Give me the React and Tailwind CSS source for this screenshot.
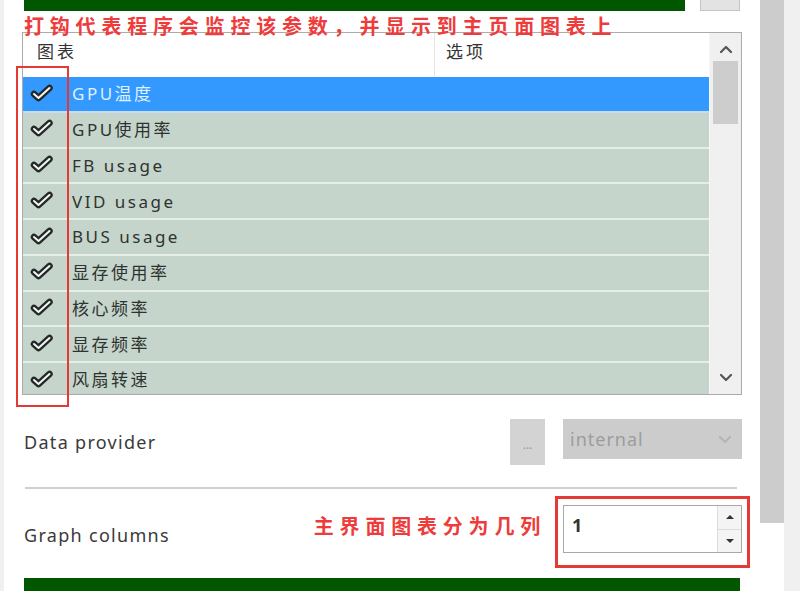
import React from "react";

const items = [
  "GPU温度",
  "GPU使用率",
  "FB usage",
  "VID usage",
  "BUS usage",
  "显存使用率",
  "核心频率",
  "显存频率",
  "风扇转速",
];

function Check() {
  return (
    <svg width="24" height="20" viewBox="0 0 24 20" className="shrink-0 -mt-[3px]">
      <path d="M4 11 L8.5 15 L19.5 5" fill="none" stroke="#232828" strokeWidth="6.5" strokeLinecap="round" strokeLinejoin="round" />
      <path d="M4 11 L8.5 15 L19.5 5" fill="none" stroke="#f4f6f4" strokeWidth="2" strokeLinecap="round" strokeLinejoin="round" />
    </svg>
  );
}

function Chevron({ up, className }) {
  return (
    <svg width="14" height="9" viewBox="0 0 14 9" className={className}>
      <path d={up ? "M2 7 L7 2 L12 7" : "M2 2 L7 7 L12 2"} fill="none" stroke="currentColor" strokeWidth="2.2" strokeLinecap="round" strokeLinejoin="round" />
    </svg>
  );
}

function MonitorList() {
  return (
    <div className="relative -mt-[2px] h-[363px] border border-[#ababab] flex bg-white">
      <div className="flex-1 flex flex-col">
        <div className="h-[44px] shrink-0 flex border-b border-white">
          <div className="w-[412px] pl-[14px] pt-[6px] text-[17px] tracking-[3px] text-[#333] border-r border-[#e4e4e4]">图表</div>
          <div className="pl-[11px] pt-[6px] text-[17px] tracking-[3px] text-[#333]">选项</div>
        </div>
        <div className="flex-1 flex flex-col overflow-hidden">
          {items.map((name, i) => (
            <div
              key={name}
              className={
                i === 0
                  ? "h-[35.75px] shrink-0 flex items-center pl-[7px] gap-[18px] bg-[#3399ff] border-b-2 border-[#c9dcf0]"
                  : "h-[35.75px] shrink-0 flex items-center pl-[7px] gap-[18px] bg-[#c5d5cb] border-b-2 border-[#e6eee8]"
              }
            >
              <Check />
              <span
                className={
                  i === 0
                    ? "text-[17px] tracking-[2.5px] text-[#dff0ff]"
                    : "text-[17px] tracking-[2.5px] text-[#2e3330]"
                }
              >
                {name}
              </span>
            </div>
          ))}
        </div>
      </div>
      <div className="w-[32px] bg-[#f0f0f0] flex flex-col items-center border-l border-[#f7f7f7]">
        <Chevron up className="mt-[12px] text-[#555]" />
        <div className="mt-[7px] w-[25px] h-[63px] bg-[#cdcdcd]" />
        <div className="flex-1" />
        <Chevron className="mb-[12px] text-[#555]" />
      </div>
      {/* red annotation box over the check column */}
      <div className="absolute left-[-7px] top-[33px] w-[53px] h-[341px] border-2 border-[#e53935]" />
    </div>
  );
}

export default function App() {
  return (
    <div
      className="w-[800px] h-[591px] flex bg-white overflow-hidden"
      style={{ fontFamily: '"Noto Sans", "Noto Sans CJK SC", sans-serif' }}
    >
      <div className="w-[4px] bg-[#f0f0f0]" />

      <div className="w-[741px] pl-[18px] pr-[3px] flex flex-col">
        {/* top bar */}
        <div className="h-[12px] flex">
          <div className="ml-[2px] w-[661px] bg-[#005700]" />
          <div className="ml-[15px] w-[40px] bg-[#e3e3e3] border border-t-0 border-[#c4c4c4]" />
        </div>

        <div className="h-[23px] pl-[2px] pt-[3px] text-[20px] leading-[26px] font-bold tracking-[5.8px] text-[#ee3b3b] whitespace-nowrap relative z-10">
          打钩代表程序会监控该参数，并显示到主页面图表上
        </div>

        <MonitorList />

        {/* data provider */}
        <div className="mt-[24px] h-[46px] flex items-center">
          <span className="pl-[2px] text-[18px] tracking-[1.3px] text-[#3a3a3a]">Data provider</span>
          <div className="flex-1" />
          <div className="w-[35px] h-[46px] bg-[#d3d3d3] flex items-center justify-center text-[12px] text-[#9a9a9a] pt-[6px]">...</div>
          <div className="ml-[18px] w-[179px] h-[40px] -mt-[6px] bg-[#cccccc] flex items-center pl-[7px] pr-[10px]">
            <span className="text-[18px] tracking-[1px] text-[#9c9c9c]">internal</span>
            <div className="flex-1" />
            <Chevron className="text-[#b5b5b5]" />
          </div>
        </div>

        <div className="mt-[22px] ml-[3px] mr-[5px] h-[2px] bg-[#cfcfcf]" />

        {/* graph columns */}
        <div className="mt-[7px] h-[72px] flex items-center">
          <span className="pl-[2px] text-[18px] tracking-[1.3px] text-[#3a3a3a] mt-[6px]">Graph columns</span>
          <div className="flex-1" />
          <span className="text-[20px] font-bold tracking-[5.8px] text-[#ee3b3b] mr-[9px] -mt-[10px] whitespace-nowrap">主界面图表分为几列</span>
          <div className="-mr-[8px] border-[3px] border-[#e53935] px-[5px] pt-[6px] pb-[12px]">
            <div className="w-[179px] h-[48px] bg-white border border-[#a9a9a9] flex">
              <div className="flex-1 pl-[8px] pt-[6px] text-[18px] font-bold text-[#333]">1</div>
              <div className="w-[24px] flex flex-col border-l border-[#dcdcdc]">
                <div className="flex-1 flex items-center justify-center border-b border-[#dcdcdc] bg-[#f4f4f4]">
                  <div className="w-0 h-0 border-l-[4px] border-r-[4px] border-b-[4px] border-l-transparent border-r-transparent border-b-[#333]" />
                </div>
                <div className="flex-1 flex items-center justify-center bg-[#f4f4f4]">
                  <div className="w-0 h-0 border-l-[4px] border-r-[4px] border-t-[4px] border-l-transparent border-r-transparent border-t-[#333]" />
                </div>
              </div>
            </div>
          </div>
        </div>

        {/* bottom bar */}
        <div className="mt-[10px] ml-[2px] mr-[2px] h-[14px] bg-[#005700]" />
      </div>

      <div className="w-[15px]" />
      <div className="w-[24px] flex flex-col">
        <div className="h-[523px] bg-[#cccccc]" />
      </div>
      <div className="w-[16px] bg-[#f0f0f0]" />
    </div>
  );
}
